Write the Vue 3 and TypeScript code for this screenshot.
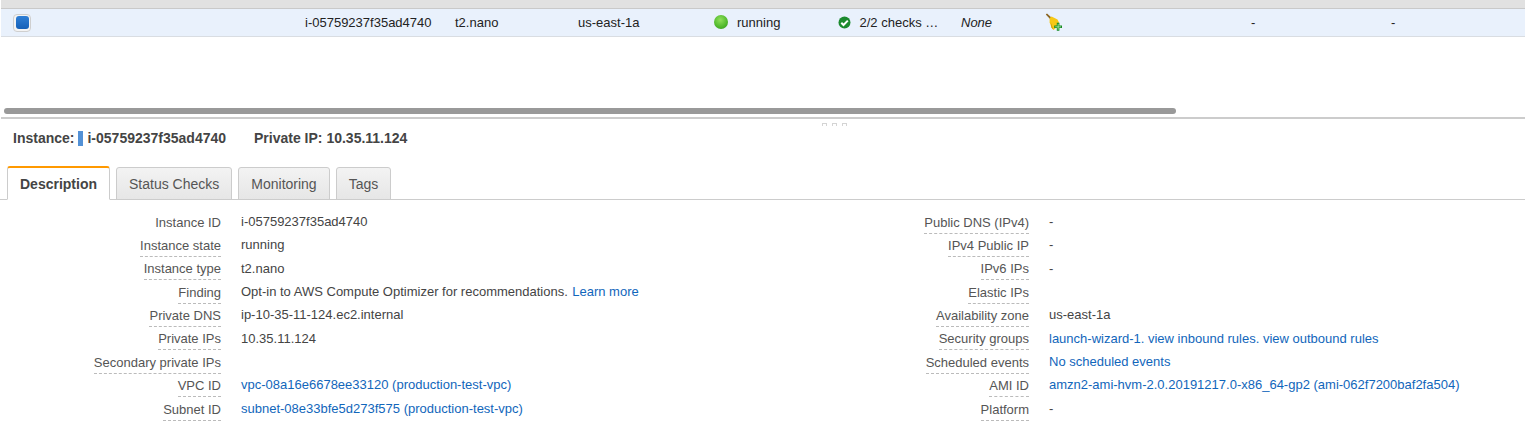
<script setup lang="ts">
interface Part { text: string; link?: boolean }
interface Row { label: string; dashed: boolean; parts: Part[] }
const plain = (text: string): Part[] => (text ? [{ text }] : [])
const link = (text: string): Part[] => [{ text, link: true }]

const left: Row[] = [
  { label: 'Instance ID', dashed: false, parts: plain('i-05759237f35ad4740') },
  { label: 'Instance state', dashed: true, parts: plain('running') },
  { label: 'Instance type', dashed: true, parts: plain('t2.nano') },
  { label: 'Finding', dashed: true, parts: [{ text: 'Opt-in to AWS Compute Optimizer for recommendations. ' }, { text: 'Learn more', link: true }] },
  { label: 'Private DNS', dashed: true, parts: plain('ip-10-35-11-124.ec2.internal') },
  { label: 'Private IPs', dashed: true, parts: plain('10.35.11.124') },
  { label: 'Secondary private IPs', dashed: true, parts: [] },
  { label: 'VPC ID', dashed: true, parts: link('vpc-08a16e6678ee33120 (production-test-vpc)') },
  { label: 'Subnet ID', dashed: true, parts: link('subnet-08e33bfe5d273f575 (production-test-vpc)') },
]
const right: Row[] = [
  { label: 'Public DNS (IPv4)', dashed: true, parts: plain('-') },
  { label: 'IPv4 Public IP', dashed: true, parts: plain('-') },
  { label: 'IPv6 IPs', dashed: true, parts: plain('-') },
  { label: 'Elastic IPs', dashed: true, parts: [] },
  { label: 'Availability zone', dashed: true, parts: plain('us-east-1a') },
  { label: 'Security groups', dashed: true, parts: link('launch-wizard-1. view inbound rules. view outbound rules') },
  { label: 'Scheduled events', dashed: true, parts: link('No scheduled events') },
  { label: 'AMI ID', dashed: true, parts: link('amzn2-ami-hvm-2.0.20191217.0-x86_64-gp2 (ami-062f7200baf2fa504)') },
  { label: 'Platform', dashed: true, parts: plain('-') },
]
const columns = [
  { rows: left, cls: 'col-left' },
  { rows: right, cls: 'col-right' },
]
const tabs = ['Description', 'Status Checks', 'Monitoring', 'Tags']
</script>

<template>
  <div class="page">
    <div class="table-head"></div>
    <div class="table-row">
      <div class="cell c-check"><span class="checkbox"><span class="check-fill"></span></span></div>
      <div class="cell c-id">i-05759237f35ad4740</div>
      <div class="cell c-type">t2.nano</div>
      <div class="cell c-zone">us-east-1a</div>
      <div class="cell c-state"><span class="dot"></span><span>running</span></div>
      <div class="cell c-checks">
        <svg class="ok" width="13" height="13" viewBox="0 0 13 13">
          <circle cx="6.5" cy="6.5" r="6" fill="#1c8a2e" />
          <path d="M3.3 6.8 5.5 9 9.8 4.6" fill="none" stroke="#fff" stroke-width="2" />
        </svg>
        <span>2/2 checks …</span>
      </div>
      <div class="cell c-none"><em>None</em></div>
      <div class="cell c-broom">
        <svg width="18" height="18" viewBox="0 0 18 18">
          <path d="M.8 1.6 2 .6 6.4 4.4 5 6Z" fill="#8a6420" />
          <path d="M4.6 5 6.6 3.4 12.5 6.5 14 9.5 12 14 8.5 17 6.5 14.5 4.6 9.5Z" fill="#f7c815" />
          <path d="M5.6 9 8.5 17 6.5 14.5Z" fill="#c9960c" />
          <path d="M11.8 9.8h2.6v2.7H17v2.6h-2.6v2.6h-2.6v-2.6H9.2v-2.6h2.6Z" fill="#158a23" />
          <path d="M12.7 10.8h.8v2.6H16v.8h-2.5v2.5h-.8v-2.5h-2.5v-.8h2.5Z" fill="#b6f0a8" />
        </svg>
      </div>
      <div class="cell c-dash1">-</div>
      <div class="cell c-dash2">-</div>
    </div>
    <div class="spacer"></div>
    <div class="scroll-track"><div class="scroll-thumb"></div></div>
    <div class="divider"></div>
    <div class="grip"><span></span><span></span><span></span></div>
    <div class="title">
      <span>Instance:</span>
      <span class="swatch"></span>
      <span>i-05759237f35ad4740</span>
      <span class="ip">Private IP: 10.35.11.124</span>
    </div>
    <div class="tabs">
      <div v-for="(tab, i) in tabs" :key="tab" class="tab" :class="{ active: i === 0 }">{{ tab }}</div>
    </div>
    <div class="details">
      <div v-for="col in columns" :key="col.cls" class="col" :class="col.cls">
        <div v-for="row in col.rows" :key="row.label" class="row">
          <div class="label"><span :class="{ dashed: row.dashed }">{{ row.label }}</span></div>
          <div class="value">
            <template v-for="part in row.parts" :key="part.text">
              <a v-if="part.link" class="link">{{ part.text }}</a>
              <span v-else>{{ part.text }}</span>
            </template>
          </div>
        </div>
      </div>
    </div>
  </div>
</template>

<style>
html, body { margin: 0; background: #fff; overflow: hidden; }
</style>

<style scoped>
.page {
  width: 1525px;
  height: 427px;
  overflow: hidden;
  font-family: "Liberation Sans", Arial, sans-serif;
  font-size: 13px;
  color: #333;
  background: #fff;
}
.table-head {
  height: 8px;
  margin-left: 1px;
  background: #e1e1e1;
  border-bottom: 1px solid #c9c9c9;
}
.table-row {
  display: flex;
  align-items: center;
  height: 27px;
  margin-left: 1px;
  background: #e9f1fc;
  border-bottom: 1px solid #d9dde2;
  color: #222;
}
.cell { flex: none; display: flex; align-items: center; white-space: nowrap; margin-top: -1px; }
.c-check { width: 304px; padding-left: 12px; box-sizing: border-box; }
.c-id { width: 150px; }
.c-type { width: 123px; }
.c-zone { width: 136px; }
.c-state { width: 124px; }
.c-checks { width: 123px; }
.c-none { width: 84px; }
.c-broom { width: 206px; }
.c-dash1 { width: 140px; }
.checkbox {
  width: 18px;
  height: 18px;
  box-sizing: border-box;
  border: 1px solid #cfcfcf;
  border-radius: 4px;
  background: #f4f4f4;
  display: flex;
  align-items: center;
  justify-content: center;
  margin-top: 1px;
}
.check-fill {
  width: 13px;
  height: 13px;
  border-radius: 3px;
  background: linear-gradient(#2f7fd6, #1560b8);
}
.dot {
  width: 14px;
  height: 14px;
  margin-right: 9px;
  border-radius: 50%;
  background: radial-gradient(circle at 45% 35%, #8fe05a, #4fb82c 60%, #2f8f1c);
}
.ok { margin-right: 8.5px; }
.spacer { height: 71px; }
.scroll-track { height: 7px; padding-left: 4px; }
.scroll-thumb {
  width: 1172px;
  height: 6px;
  border-radius: 3px;
  background: #999;
}
.divider {
  height: 2px;
  margin-top: 2px;
  margin-left: 1px;
  background: #cccccc;
}
.grip {
  display: flex;
  gap: 5px;
  height: 3px;
  padding-top: 4px;
  padding-left: 822px;
}
.grip span {
  width: 5px;
  height: 3px;
  box-sizing: border-box;
  border: 1px solid #d4d4d4;
  border-bottom: 0;
}
.title {
  display: flex;
  align-items: center;
  height: 16px;
  margin-top: 4px;
  padding: 0 0 0 13px;
  font-size: 14px;
  font-weight: 700;
  line-height: 16px;
  color: #444;
}
.swatch {
  width: 5px;
  height: 15px;
  margin: 0 4px;
  background: #5391d6;
}
.ip { margin-left: 28px; }
.tabs {
  display: flex;
  align-items: flex-end;
  gap: 6px;
  height: 34px;
  margin-top: 20px;
  padding-left: 7px;
  border-bottom: 1px solid #ccc;
  box-sizing: border-box;
  font-size: 14px;
}
.tab {
  box-sizing: border-box;
  height: 33px;
  margin-bottom: -1px;
  padding: 0 12px;
  line-height: 32px;
  color: #555;
  background: linear-gradient(#f3f3f3, #e6e6e6);
  border: 1px solid #ccc;
  border-radius: 3px 3px 0 0;
}
.tab.active {
  height: 34px;
  line-height: 33px;
  font-weight: 700;
  color: #444;
  background: #fff;
  border-top: 2px solid #f90;
  border-bottom-color: #fff;
}
.details {
  display: flex;
  padding-top: 14.6px;
}
.col { flex: none; }
.col-left { width: 808px; }
.row {
  display: flex;
  height: 23.375px;
  line-height: 16px;
  white-space: nowrap;
}
.label {
  flex: none;
  width: 221px;
  text-align: right;
  color: #555;
}
.dashed {
  display: inline-block;
  height: 19px;
  border-bottom: 1px dashed #bbb;
  box-sizing: border-box;
}
.value {
  padding-left: 20px;
  color: #444;
  margin-top: -0.8px;
}
.value span + .link { margin-left: 0.8px; }
.link { color: #1166bb; }
</style>
